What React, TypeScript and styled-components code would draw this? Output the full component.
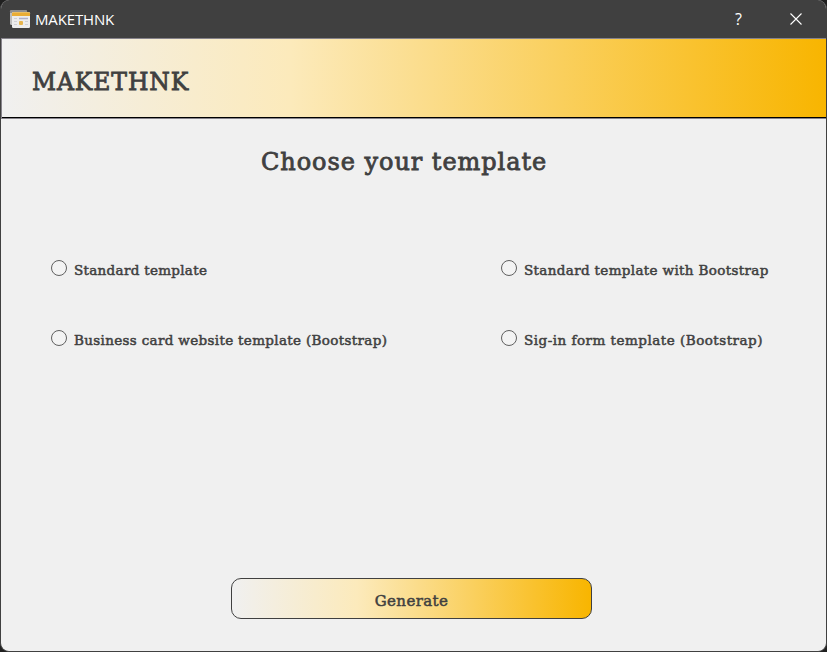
import React from "react";
import styled, { createGlobalStyle } from "styled-components";

const Global = createGlobalStyle`
  * { box-sizing: border-box; }
  body { margin: 0; background: #202020; }
`;
const serif = `"DejaVu Serif", serif`;
const gradient = `linear-gradient(90deg, #f0f0f0 0%, #fceabb 35%, #f8b500 100%)`;

const Window = styled.div`
  width: 827px;
  height: 652px;
  display: flex;
  flex-direction: column;
  overflow: hidden;
  background: #f0f0f0;
  border: 1px solid #404040;
  border-top: 0;
  border-radius: 9px;
  color: #404040;
  font-family: ${serif};
`;
const TitleBar = styled.div`
  height: 38px;
  flex: none;
  display: flex;
  align-items: center;
  padding: 0 2px 0 8px;
  background: #404040;
  color: #fff;
`;
const Caption = styled.span`
  flex: 1;
  margin-left: 4px;
  font: 15px/20px "Open Sans", sans-serif;
  letter-spacing: -0.15px;
`;
const WindowButton = styled.button`
  width: 57px;
  height: 38px;
  display: grid;
  place-items: center;
  padding: 0;
  border: 0;
  background: none;
  color: #fff;
  font: 16px/20px "Open Sans", sans-serif;
`;
const Header = styled.header`
  height: 81px;
  flex: none;
  display: flex;
  align-items: center;
  padding: 6px 0 0 30px;
  background: ${gradient};
  border: 1px solid #86838b;
  border-right: 0;
  box-shadow: inset 0 -1px 0 #000;
`;
const Brand = styled.h1`
  margin: 0;
  font-size: 23.5px;
  line-height: 32px;
  font-weight: 400;
  -webkit-text-stroke: 0.8px #404040;
  letter-spacing: 0.9px;
`;
const Content = styled.main`
  flex: 1;
  display: flex;
  flex-direction: column;
`;
const Heading = styled.h2`
  margin: 27px 0 0 260px;
  font-size: 24px;
  line-height: 32px;
  font-weight: 400;
  -webkit-text-stroke: 0.8px #404040;
  letter-spacing: 0.95px;
  white-space: nowrap;
`;
const Options = styled.div`
  display: grid;
  grid-template-columns: 450px 1fr;
  grid-auto-rows: 20px;
  row-gap: 50px;
  margin: 82px 0 0 50px;
`;
const Option = styled.label<{ $spacing: number }>`
  display: flex;
  align-items: center;
  gap: 7px;
  font-size: 13.5px;
  line-height: 20px;
  letter-spacing: ${(p) => p.$spacing}px;
  -webkit-text-stroke: 0.5px #404040;
  white-space: nowrap;
`;
const Radio = styled.input`
  appearance: none;
  width: 16px;
  height: 16px;
  margin: 0 0 4px;
  border: 1px solid #606060;
  border-radius: 50%;
  background: #f3f3f3;
`;
const Generate = styled.button`
  width: 361px;
  height: 41px;
  margin: auto 0 32px 230px;
  padding: 4px 0 0;
  border: 1px solid #404040;
  border-radius: 10px;
  background: ${gradient};
  color: #404040;
  font-family: ${serif};
  font-size: 15px;
  line-height: 20px;
  letter-spacing: 0.4px;
  -webkit-text-stroke: 0.5px #404040;
`;

const AppIcon = () => (
  <svg width="22" height="20" viewBox="0 0 22 20">
    <rect x="1" y="1" width="17" height="15" rx="1.5" fill="#bdbdbd" />
    <path d="M1 4V2.5Q1 1 2.5 1h14Q18 1 18 2.5V4z" fill="#8f8f8f" />
    <rect x="3" y="3" width="18" height="16" rx="1.3" fill="#ececec" />
    <path d="M3 7V4.5Q3 3.3 4.2 3.3h15.6Q21 3.3 21 4.5V7z" fill="#e9ad35" />
    <path d="M5 9.5h3M5 12.5h3M5 15.5h3M16 12.5h3M16 15.5h3" stroke="#cfcfd4" />
    <path d="M10 9.5h9" stroke="#aeb0c8" strokeWidth="1.6" />
    <rect x="10" y="12" width="4" height="4" rx="1" fill="#e6b44c" />
  </svg>
);

const options = [
  { text: "Standard template", spacing: 0.3 },
  { text: "Standard template with Bootstrap", spacing: 0.34 },
  { text: "Business card website template (Bootstrap)", spacing: 0.33 },
  { text: "Sig-in form template (Bootstrap)", spacing: 0.49 },
];

export default function App() {
  return (
    <>
      <Global />
      <Window>
        <TitleBar>
          <AppIcon />
          <Caption>MAKETHNK</Caption>
          <WindowButton aria-label="Help">?</WindowButton>
          <WindowButton aria-label="Close">
            <svg width="12" height="12" viewBox="0 0 12 12">
              <path d="M.5.5l11 11M11.5.5l-11 11" stroke="#fff" strokeWidth="1.1" />
            </svg>
          </WindowButton>
        </TitleBar>
        <Header><Brand>MAKETHNK</Brand></Header>
        <Content>
          <Heading>Choose your template</Heading>
          <Options>
            {options.map(({ text, spacing }) => (
              <Option key={text} $spacing={spacing}>
                <Radio type="radio" name="template" />
                {text}
              </Option>
            ))}
          </Options>
          <Generate>Generate</Generate>
        </Content>
      </Window>
    </>
  );
}
